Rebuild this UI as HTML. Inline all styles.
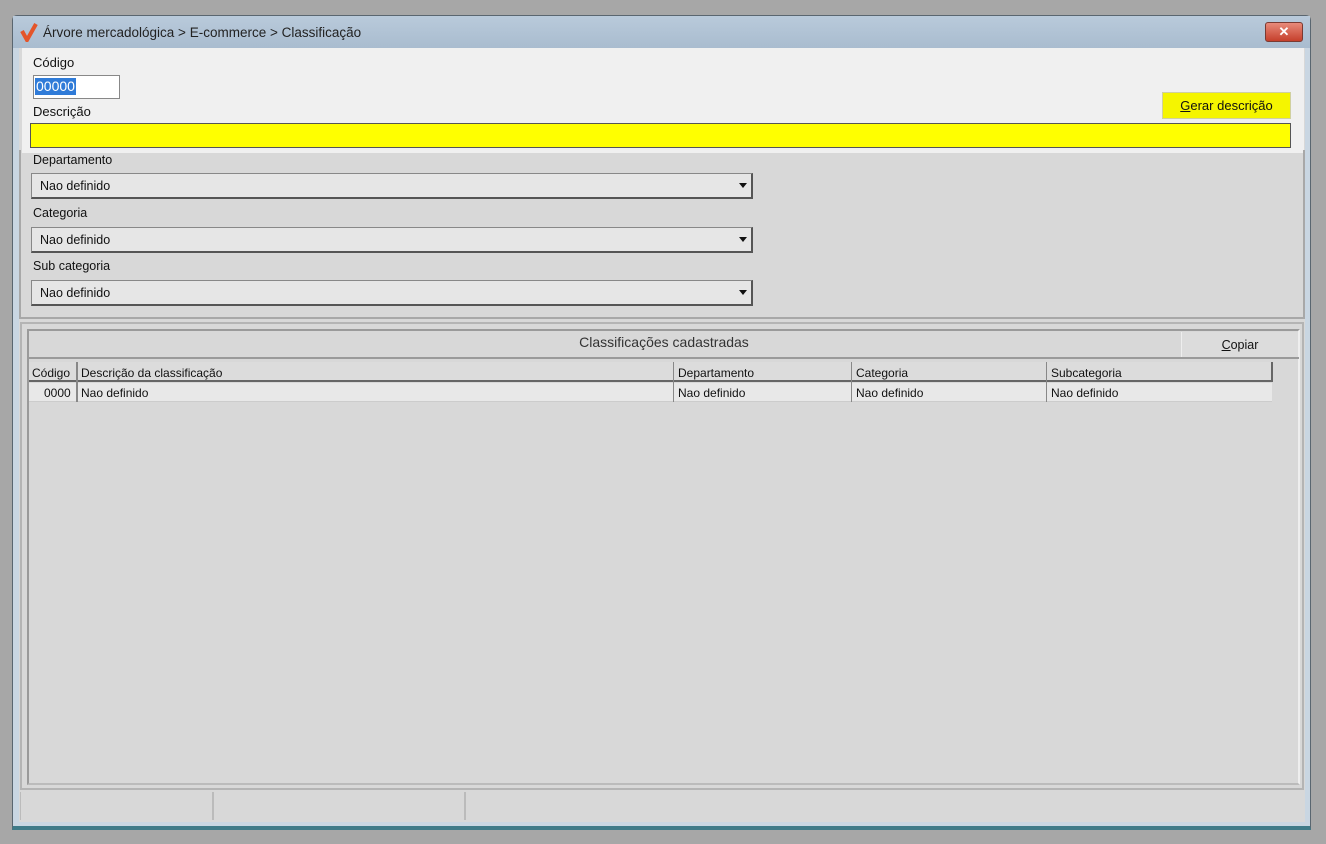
<!DOCTYPE html>
<html><head><meta charset="utf-8"><style>
*{margin:0;padding:0;box-sizing:border-box}
body{width:1326px;height:844px;background:#a7a7a7;position:relative;overflow:hidden;font-family:"Liberation Sans",sans-serif;font-size:13px;color:#111}
.a{position:absolute}
.win{left:12px;top:15px;width:1299px;height:815px;background:#c9d6e2;border:1px solid #5a6670;border-radius:5px 5px 0 0;border-bottom:4px solid #3f7a88}
.title{left:13px;top:16px;width:1297px;height:32px;background:linear-gradient(#b9cadb,#a9bccf)}
.lbl{font-size:13px}
.combo{background:#e6e6e6;border:1px solid #888;border-right:2px solid #555;border-bottom:2px solid #555;height:26px;padding:5px 8px;font-size:12.5px}
.arr{position:absolute;right:4px;top:9px;width:0;height:0;border-left:4px solid transparent;border-right:4px solid transparent;border-top:5px solid #111}
.cell{position:absolute;font-size:12px;padding:2px 3px;white-space:nowrap;overflow:hidden}
</style></head><body>
<div class="a win"></div>
<div class="a title"></div>
<svg class="a" style="left:19px;top:22px" width="20" height="20"><path d="M3 9 L8 18 L17 2" stroke="#e4552a" stroke-width="4" fill="none"/></svg>
<div class="a" style="left:43px;top:25px;font-size:13.5px;color:#222">Árvore mercadológica &gt; E-commerce &gt; Classificação</div>
<div class="a" style="left:1265px;top:22px;width:38px;height:20px;background:linear-gradient(#e88a7a,#c5402c);border:1px solid #7a3a32;border-radius:3px;color:#fff;text-align:center;font-weight:bold;font-size:13px;line-height:18px">✕</div>
<div class="a" style="left:19px;top:48px;width:1286px;height:774px;background:#d8d8d8"></div>
<div class="a" style="left:22px;top:48px;width:1282px;height:105px;background:#f0f0f0"></div>
<div class="a" style="left:19px;top:150px;width:1286px;height:169px;border:2px solid #a8a8a8;border-top:none"></div>
<div class="a lbl" style="left:33px;top:55px">Código</div>
<div class="a" style="left:33px;top:75px;width:87px;height:24px;background:#fff;border:1px solid #888"></div>
<div class="a" style="left:35px;top:78px;background:#2f7bd8;color:#fff;font-size:14px;padding:0 1px;line-height:17px">00000</div>
<div class="a lbl" style="left:33px;top:104px">Descrição</div>
<div class="a" style="left:1162px;top:92px;width:129px;height:27px;background:#f5f500;border:1px solid #d0d0a0;text-align:center;line-height:26px;font-size:13px"><u>G</u>erar descrição</div>
<div class="a" style="left:30px;top:123px;width:1261px;height:25px;background:#ffff00;border:1px solid #555"></div>
<div class="a lbl" style="left:33px;top:153px;font-size:12.5px">Departamento</div>
<div class="a combo" style="left:31px;top:173px;width:722px">Nao definido<span class="arr"></span></div>
<div class="a lbl" style="left:33px;top:206px;font-size:12.5px">Categoria</div>
<div class="a combo" style="left:31px;top:227px;width:722px">Nao definido<span class="arr"></span></div>
<div class="a lbl" style="left:33px;top:259px;font-size:12.5px">Sub categoria</div>
<div class="a combo" style="left:31px;top:280px;width:722px">Nao definido<span class="arr"></span></div>
<div class="a" style="left:20px;top:322px;width:1284px;height:468px;border:2px solid #b4b4b4"></div>
<div class="a" style="left:27px;top:329px;width:1273px;height:456px;border:2px solid #9a9a9a;border-right-color:#eee;border-bottom-color:#bbb"></div>
<div class="a" style="left:29px;top:331px;width:1270px;height:28px;border-bottom:2px solid #9a9a9a;text-align:center;font-size:14px;line-height:22px;color:#333">Classificações cadastradas</div>
<div class="a" style="left:1181px;top:332px;width:117px;height:25px;background:#dcdcdc;border-left:1px solid #eee;text-align:center;line-height:26px;font-size:12.5px"><u>C</u>opiar</div>
<div class="a" style="left:29px;top:362px;width:1243px;height:20px;background:#dcdcdc;border-bottom:2px solid #666"></div>
<div class="a" style="left:29px;top:383px;width:1243px;height:19px;background:#e8e8e8;border-bottom:1px solid #ccc"></div>
<div class="a" style="left:1271px;top:362px;width:2px;height:20px;background:#666"></div>
<div class="a" style="left:76px;top:362px;width:2px;height:40px;background:#888"></div>
<div class="a" style="left:673px;top:362px;width:1px;height:40px;background:#888"></div>
<div class="a" style="left:851px;top:362px;width:1px;height:40px;background:#888"></div>
<div class="a" style="left:1046px;top:362px;width:1px;height:40px;background:#888"></div>
<div class="cell" style="left:29px;top:364px">Código</div>
<div class="cell" style="left:78px;top:364px">Descrição da classificação</div>
<div class="cell" style="left:675px;top:364px">Departamento</div>
<div class="cell" style="left:853px;top:364px">Categoria</div>
<div class="cell" style="left:1048px;top:364px">Subcategoria</div>
<div class="cell" style="left:41px;top:384px">0000</div>
<div class="cell" style="left:78px;top:384px">Nao definido</div>
<div class="cell" style="left:675px;top:384px">Nao definido</div>
<div class="cell" style="left:853px;top:384px">Nao definido</div>
<div class="cell" style="left:1048px;top:384px">Nao definido</div>
<div class="a" style="left:20px;top:792px;width:194px;height:28px;border-left:1px solid #bbb;border-right:2px solid #bbb"></div>
<div class="a" style="left:215px;top:792px;width:251px;height:28px;border-right:2px solid #bbb"></div>
</body></html>
